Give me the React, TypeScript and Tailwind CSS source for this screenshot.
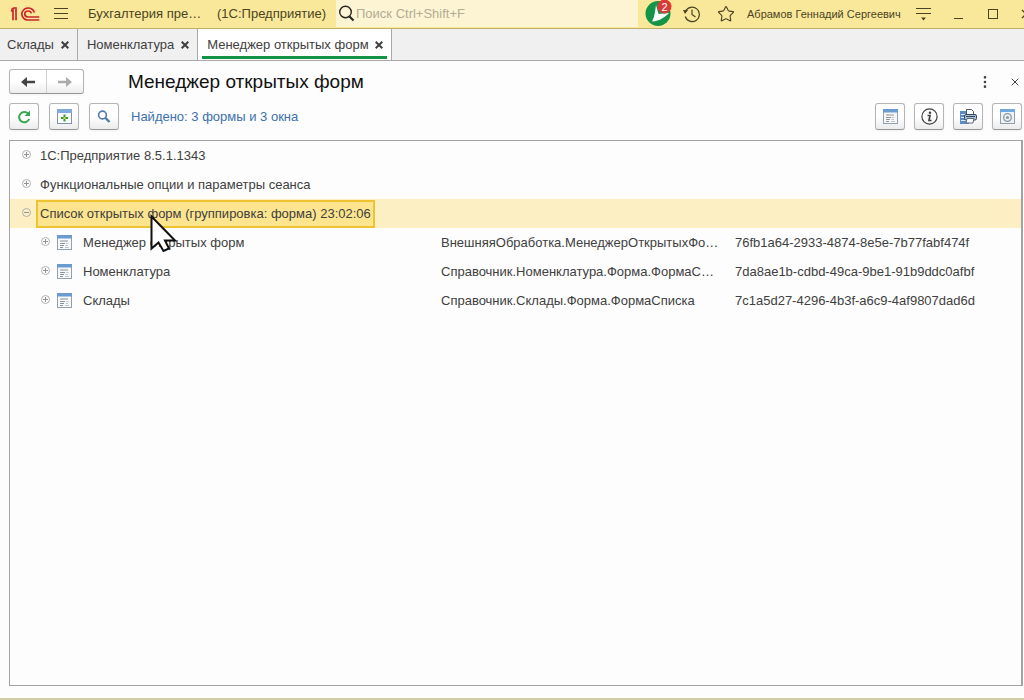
import React from 'react';
import { MoreVertical, Star } from 'lucide-react';

interface FormRow {
  title: string;
  path: string;
  id: string;
}

const tabs = [
  { title: 'Склады', active: false },
  { title: 'Номенклатура', active: false },
  { title: 'Менеджер открытых форм', active: true },
];

const forms: FormRow[] = [
  {
    title: 'Менеджер открытых форм',
    path: 'ВнешняяОбработка.МенеджерОткрытыхФо…',
    id: '76fb1a64-2933-4874-8e5e-7b77fabf474f',
  },
  {
    title: 'Номенклатура',
    path: 'Справочник.Номенклатура.Форма.ФормаС…',
    id: '7da8ae1b-cdbd-49ca-9be1-91b9ddc0afbf',
  },
  {
    title: 'Склады',
    path: 'Справочник.Склады.Форма.ФормаСписка',
    id: '7c1a5d27-4296-4b3f-a6c9-4af9807dad6d',
  },
];

function Logo() {
  return (
    <svg className="h-[14px] w-[30px] shrink-0" viewBox="0 0 90 42" fill="none" stroke="#c9252b" strokeWidth="5">
      <path d="M3 13 L9 9 V40" />
      <path d="M4 8 L11 3 H18 V40" />
      <path d="M73 17 A19 18 0 1 0 54 39 H88" />
      <path d="M64 19 A10 9 0 1 0 54 30 H88" />
    </svg>
  );
}

function CrossIcon({ className }: { className: string }) {
  return (
    <svg className={className} viewBox="0 0 8 8" fill="none" stroke="currentColor">
      <path d="M0.7 0.7 L7.3 7.3 M7.3 0.7 L0.7 7.3" />
    </svg>
  );
}

function FormIcon() {
  return (
    <svg className="h-[15px] w-[15px] shrink-0" viewBox="0 0 15 15" fill="none">
      <rect x="0.5" y="1.5" width="14" height="13" fill="#f7f8fa" stroke="#93a0ad" />
      <rect x="0" y="0" width="15" height="3.5" fill="#6b9bd0" />
      <path d="M3 6 H11 M3 8.5 H8 M3 10.500 H7 M3 12.5 H6" stroke="#8f9398" />
      <path d="M9 8.500 H11.500 M8.500 10.500 H11 M8 12.500 H12" stroke="#c3c7cb" />
    </svg>
  );
}

function TitleBar() {
  return (
    <header className="flex h-[29px] shrink-0 items-center overflow-hidden border-b border-[#bfb068] bg-[#f9e89a] pb-px text-[#4b4423]">
      <div className="flex shrink-0 items-center pl-[10px]">
        <Logo />
        <button aria-label="Главное меню" className="ml-[14px]">
          <svg className="h-[12px] w-[14px]" viewBox="0 0 14 12" stroke="#4b4423">
            <path d="M0 0.500 H14 M0 5.500 H14 M0 10.500 H14" />
          </svg>
        </button>
        <span className="ml-[20px] w-[129px]">Бухгалтерия пре…</span>
        <span className="w-[119px]">(1С:Предприятие)</span>
      </div>
      <label className="flex h-[27px] min-w-0 flex-1 items-center bg-[#fdf4d3]">
        <svg className="ml-[2px] h-[17px] w-[17px] shrink-0" viewBox="0 0 17 17" fill="none" stroke="#26241c">
          <circle cx="7.500" cy="7" r="5.800" strokeWidth="1.400" />
          <path d="M11.500 11.500 L15.500 15.500" strokeWidth="2.200" />
        </svg>
        <input
          type="text"
          aria-label="Поиск"
          placeholder="Поиск Ctrl+Shift+F"
          className="min-w-0 flex-1 bg-transparent pl-px outline-none placeholder:text-[#b3ac94]"
        />
      </label>
      <div className="flex w-[386px] shrink-0 items-center overflow-hidden pl-[7px]">
        <button aria-label="Оповещения: 2" className="shrink-0">
          <svg className="h-[27px] w-[28px]" viewBox="0 0 28 27">
            <circle cx="13" cy="13.500" r="12.500" fill="#149447" />
            <path d="M11 5 L13.500 14 L24 13 C20 17 15 21 7 21.500 C9.500 17 10 12 11 5 Z" fill="#fff" />
            <circle cx="19.500" cy="6.500" r="7" fill="#dc3a36" />
            <text x="19.500" y="10.500" textAnchor="middle" fontSize="11" fill="#fff">2</text>
          </svg>
        </button>
        <button aria-label="История" className="ml-[10px] shrink-0">
          <svg className="h-[18px] w-[18px]" viewBox="0 0 18 18" fill="none" stroke="#4b4423" strokeWidth="1.200">
            <path d="M2.600 6.500 A7.200 7.200 0 1 1 2.300 11.500" />
            <path d="M9 4.500 V9.500 L12.500 12" />
            <path d="M0 5 L5 5 L2 9 Z" fill="#4b4423" stroke="none" />
          </svg>
        </button>
        <button aria-label="Избранное" className="ml-[16px] shrink-0">
          <Star size={18} strokeWidth={1.500} />
        </button>
        <span className="ml-[12px] w-[169px] shrink-0 text-[11px]">Абрамов Геннадий Сергеевич</span>
        <button aria-label="Настройки" className="shrink-0">
          <svg className="h-[14px] w-[15px]" viewBox="0 0 15 14" stroke="#4b4423">
            <path d="M0 1.500 H15 M0 6.500 H15" />
            <path d="M5 10.500 H10 L7.500 13.500 Z" fill="#4b4423" stroke="none" />
          </svg>
        </button>
        <button aria-label="Свернуть" className="ml-[23px] flex h-[10px] w-[9px] shrink-0 items-end">
          <span className="h-px w-full bg-[#4b4423]" />
        </button>
        <button aria-label="Развернуть" className="ml-[25px] h-[10px] w-[10px] shrink-0 border border-[#4b4423]" />
        <button aria-label="Закрыть окно" className="ml-[23px] shrink-0">
          <CrossIcon className="h-[10px] w-[10px]" />
        </button>
      </div>
    </header>
  );
}

function TabBar() {
  return (
    <nav className="flex h-[32px] shrink-0 border-b border-[#a9a9a9] bg-[#f0f0f0]">
      {tabs.map((tab) => (
        <div
          key={tab.title}
          className={`flex border-r border-[#a9a9a9] first:pl-[3px] ${tab.active ? 'bg-white px-[4px]' : 'pl-[5px] pr-[4px]'}`}
        >
          <div
            className={`mb-px flex items-center border-b-[3px] pr-[4px] ${
              tab.active ? 'gap-[6px] border-[#159447] pl-[5px]' : 'gap-[7px] border-transparent pl-[4px]'
            }`}
          >
            <button className="pt-[4px]">{tab.title}</button>
            <button aria-label={`Закрыть ${tab.title}`} className="pt-[4px]">
              <CrossIcon className="h-[8px] w-[8px] stroke-2" />
            </button>
          </div>
        </div>
      ))}
    </nav>
  );
}

function ToolButton({ label, children }: { label: string; children: React.ReactNode }) {
  return (
    <button
      aria-label={label}
      className="flex h-[27px] w-[30px] items-center justify-center rounded-[3px] border border-[#b4b4b4] border-b-[#989898] bg-linear-to-b from-white from-50% to-[#ececec] shadow-xs"
    >
      {children}
    </button>
  );
}

function Toolbar() {
  return (
    <div className="mt-[9px] flex items-center justify-between pr-[2px] pl-[9px]">
      <div className="flex items-center gap-[10px]">
        <ToolButton label="Обновить">
          <svg className="h-[14px] w-[14px]" viewBox="0 0 14 14" fill="none">
            <path d="M11 3.400 A5.200 5.200 0 1 0 12.200 9" stroke="#35a84c" strokeWidth="2" />
            <path d="M13 0.500 V6 H7.500 Z" fill="#35a84c" />
          </svg>
        </ToolButton>
        <ToolButton label="Добавить">
          <svg className="h-[15px] w-[15px]" viewBox="0 0 15 15" fill="none">
            <rect x="0.500" y="1.500" width="14" height="13" fill="#fff" stroke="#7f93a8" />
            <rect x="0" y="0" width="15" height="4" fill="#7faadb" />
            <path d="M7.500 5.500 V12.500 M4 9 H11" stroke="#2e9f36" strokeWidth="2" />
            <path d="M6.500 9 H8.500" stroke="#e3cf4a" strokeWidth="2" />
          </svg>
        </ToolButton>
        <ToolButton label="Найти">
          <svg className="h-[14px] w-[14px]" viewBox="0 0 14 14" fill="none" stroke="#5079ae">
            <circle cx="5.500" cy="5" r="3.900" strokeWidth="1.600" />
            <path d="M8.500 8 L12.500 12" strokeWidth="2.400" />
          </svg>
        </ToolButton>
        <a href="#found" className="ml-[2px] text-[#3c6fae]">Найдено: 3 формы и 3 окна</a>
      </div>
      <div className="flex items-center gap-[9px]">
        <ToolButton label="Форма">
          <FormIcon />
        </ToolButton>
        <ToolButton label="Сведения">
          <svg className="h-[17px] w-[17px]" viewBox="0 0 17 17" fill="none" stroke="#404040">
            <circle cx="8.500" cy="8.500" r="7.600" strokeWidth="1.200" />
            <path d="M6.500 7.500 H9 L8 12.500 H10.500" strokeWidth="1.700" />
            <circle cx="9" cy="4.700" r="1.300" fill="#404040" stroke="none" />
          </svg>
        </ToolButton>
        <ToolButton label="Печать">
          <svg className="h-[16px] w-[17px]" viewBox="0 0 17 16" fill="none">
            <path d="M0 2 H7 V5 H5 V11 H9 V15 H0 Z" fill="#5b8cc4" />
            <path d="M1 5.500 H5 M1 8.500 H5 M1 11.500 H8" stroke="#dce9f6" />
            <path d="M6.500 6 V0.500 H11.500 L13.500 2.500 V6" fill="#fff" stroke="#4d5763" />
            <rect x="4.500" y="5.500" width="12" height="5.500" rx="1.500" fill="#a9bed3" stroke="#37475a" />
            <path d="M6 7.500 H15" stroke="#37475a" />
            <path d="M7 9.500 H14 L13 14 H6 Z" fill="#fff" stroke="#5c6b7c" />
          </svg>
        </ToolButton>
        <ToolButton label="Настройка формы">
          <svg className="h-[15px] w-[15px]" viewBox="0 0 15 15" fill="none">
            <rect x="0.500" y="1.500" width="14" height="13" fill="#eef1f3" stroke="#8f9fae" />
            <rect x="0" y="0" width="15" height="3" fill="#6fa8dc" />
            <circle cx="7.500" cy="8.500" r="3.800" stroke="#8b98a5" strokeWidth="1.300" />
            <circle cx="7.500" cy="8.500" r="1.600" fill="#8b98a5" />
          </svg>
        </ToolButton>
      </div>
    </div>
  );
}

function Toggle({ open, label }: { open?: boolean; label: string }) {
  return (
    <button aria-label={label} aria-expanded={!!open} className="shrink-0 pb-[2px]">
      <svg className="h-[9px] w-[9px]" viewBox="0 0 9 9" fill="none" stroke="#929292">
        <circle cx="4.500" cy="4.500" r="4" stroke="#b0b0b0" />
        <path d={open ? 'M2 4.500 H7' : 'M2 4.500 H7 M4.500 2 V7'} />
      </svg>
    </button>
  );
}

function Pointer() {
  return (
    <svg
      className="pointer-events-none absolute top-[12px] left-[112px] z-10 h-[40px] w-[28px]"
      viewBox="0 0 28 40"
      fill="#fff"
      stroke="#111"
      strokeWidth="2"
    >
      <path d="M1.500 2.500 V34.500 L8.500 28.500 L13.500 37 L19 34.500 L15 26.500 H25 Z" />
    </svg>
  );
}

function GroupRow({ title, open }: { title: string; open?: boolean }) {
  return (
    <tr className={`h-[29px] ${open ? 'bg-[#fcefc3]' : ''}`}>
      <td colSpan={3}>
        <div className="flex items-center pl-[12px]">
          <Toggle label={title} open={open} />
          {open ? (
            <span className="relative ml-[5px] flex h-[28px] items-center border-2 border-[#ecc431] bg-[#fde48e] px-[2px]">
              {title}
              <Pointer />
            </span>
          ) : (
            <span className="ml-[9px]">{title}</span>
          )}
        </div>
      </td>
    </tr>
  );
}

function FormsTree() {
  return (
    <div className="mt-[10px] mr-px ml-[9px] grow border border-r-2 border-[#a3a3a3]">
      <table className="w-full table-fixed border-collapse text-left">
        <colgroup>
          <col className="w-[431px]" />
          <col className="w-[294px]" />
          <col />
        </colgroup>
        <tbody>
          <GroupRow title="1С:Предприятие 8.5.1.1343" />
          <GroupRow title="Функциональные опции и параметры сеанса" />
          <GroupRow title="Список открытых форм (группировка: форма) 23:02:06" open />
          {forms.map((form) => (
            <tr key={form.id} className="h-[29px]">
              <td>
                <div className="flex items-center pl-[31px]">
                  <Toggle label={form.title} />
                  <span className="ml-[7px]"><FormIcon /></span>
                  <span className="ml-[11px]">{form.title}</span>
                </div>
              </td>
              <td className="whitespace-nowrap">{form.path}</td>
              <td className="whitespace-nowrap">{form.id}</td>
            </tr>
          ))}
        </tbody>
      </table>
    </div>
  );
}

export default function App() {
  return (
    <div className="flex min-h-screen flex-col overflow-hidden border-b-2 border-[#d3cba6] bg-[#fdfdfd] font-['Liberation_Sans',Arial,sans-serif] text-[13px] leading-[16px] text-[#404040]">
      <TitleBar />
      <TabBar />
      <main className="flex grow flex-col pb-[12px]">
        <div className="mt-[8px] flex items-center pl-[9px]">
          <div className="flex h-[25px] rounded-[3px] border border-[#b4b4b4] border-b-[#989898] bg-linear-to-b from-white from-50% to-[#ececec] shadow-xs">
            <button aria-label="Назад" className="flex w-[37px] items-center justify-center border-r border-[#d0d0d0]">
              <svg className="h-[10px] w-[14px]" viewBox="0 0 14 10" fill="#444">
                <path d="M0 5 L6 0 V3.800 H14 V6.200 H6 V10 Z" />
              </svg>
            </button>
            <button aria-label="Вперед" className="flex w-[36px] items-center justify-center">
              <svg className="h-[10px] w-[14px]" viewBox="0 0 14 10" fill="#ababab">
                <path d="M14 5 L8 0 V3.800 H0 V6.200 H8 V10 Z" />
              </svg>
            </button>
          </div>
          <h1 className="ml-[44px] text-[19px] leading-[24px] text-[#111]">Менеджер открытых форм</h1>
          <button aria-label="Еще" className="ml-auto">
            <MoreVertical size={16} strokeWidth={2} />
          </button>
          <button aria-label="Закрыть" className="mr-[5px] ml-[18px]">
            <CrossIcon className="h-[8px] w-[8px]" />
          </button>
        </div>
        <Toolbar />
        <FormsTree />
      </main>
    </div>
  );
}
